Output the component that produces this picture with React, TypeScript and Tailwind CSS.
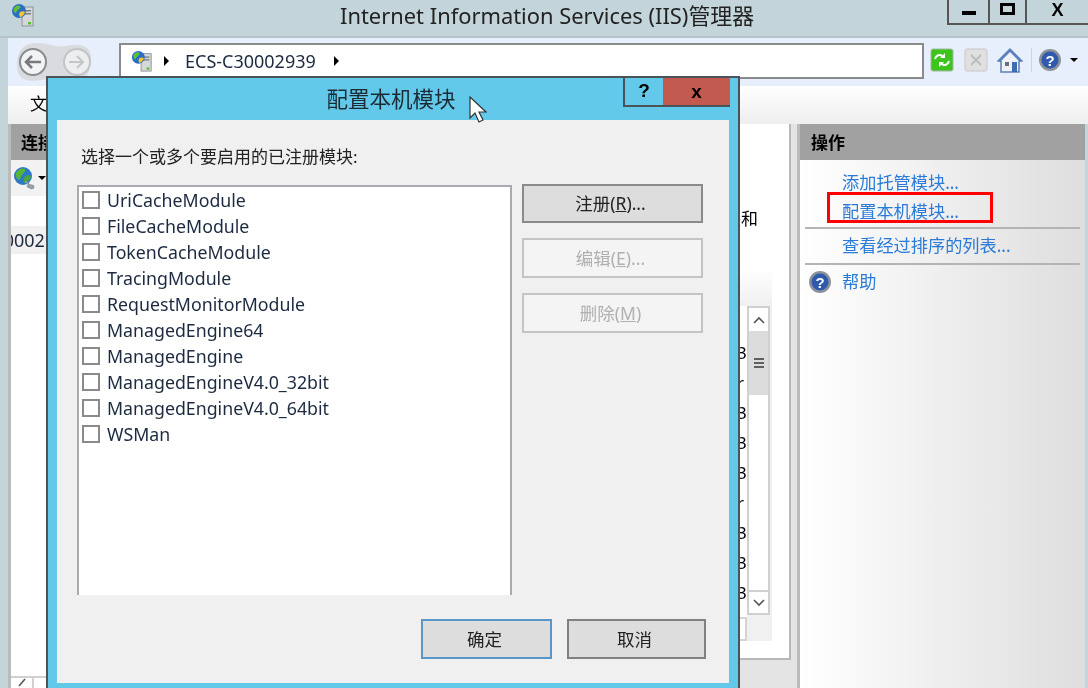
import React from "react";

const SANS = "font-['Noto_Sans','Noto_Sans_CJK_SC',sans-serif]";

const modules = [
  "UriCacheModule",
  "FileCacheModule",
  "TokenCacheModule",
  "TracingModule",
  "RequestMonitorModule",
  "ManagedEngine64",
  "ManagedEngine",
  "ManagedEngineV4.0_32bit",
  "ManagedEngineV4.0_64bit",
  "WSMan",
];

// characters of the hidden table that stick out right of the dialog
const rowEnds = ["3", "r", "3", "3", "3", "r", "3", "3", "3"];

function ServerGlobe({ className }: { className: string }) {
  return (
    <svg viewBox="0 0 24 24" className={className}>
      <rect x="11" y="4" width="11" height="19" fill="#d5d8da" stroke="#8d9296" strokeWidth="1" />
      <rect x="13" y="7" width="7" height="1.5" fill="#7b8084" />
      <rect x="13" y="10" width="7" height="1.5" fill="#7b8084" />
      <rect x="17" y="19" width="3" height="2.5" fill="#58c02c" />
      <circle cx="8" cy="8" r="7" fill="#2a6fc4" />
      <path d="M3 5c2-3 5-3 6-2 1 2-1 3-2 4-2 1-1 3-3 3-1-1-2-3-1-5z" fill="#5fbf3a" />
      <path d="M9 9c2-1 4-1 5 0-1 3-3 5-5 5-1-2-1-3 0-5z" fill="#f2c531" />
    </svg>
  );
}

function GlobeTool() {
  return (
    <svg viewBox="0 0 24 24" className="w-[24px] h-[24px]">
      <circle cx="10" cy="10" r="9" fill="#2d78c8" />
      <path d="M3 7c3-5 7-5 9-4 1 3-2 4-3 6-2 2-1 4-3 5-2-1-4-4-3-7z" fill="#56b53a" />
      <path d="M11 11c3-2 6-2 7-1-1 4-4 7-6 7-2-2-2-4-1-6z" fill="#4aa53a" />
      <path d="M12 16c2 0 3 1 4 3l4 1c1 1 0 3-2 2l-4-2" fill="none" stroke="#8e9aa0" strokeWidth="2" />
    </svg>
  );
}

function NavButtons() {
  return (
    <svg viewBox="0 0 80 50" className="w-[80px] h-[50px]">
      <path
        d="M3 26C3 8 12 3 24 3c12 0 16 5 28 3 10-2 24-3 25 11 1 16-8 28-22 28-12 0-14-8-28-5C14 42 3 40 3 26z"
        fill="#d9dbde"
      />
      <circle cx="19" cy="22" r="13" fill="#f2f3f5" stroke="#8a8c8e" strokeWidth="2" />
      <path d="M27 22H12m6-6l-6 6 6 6" fill="none" stroke="#77797b" strokeWidth="2.5" />
      <circle cx="63" cy="22" r="13" fill="#eceef0" stroke="#c2c4c6" strokeWidth="2" />
      <path d="M55 22h14m-6-6l6 6-6 6" fill="none" stroke="#c4c6c8" strokeWidth="2" />
    </svg>
  );
}

function HelpIcon({ size }: { size: string }) {
  return (
    <svg viewBox="0 0 24 24" className={size}>
      <circle cx="12" cy="12" r="11" fill="#8d929a" />
      <circle cx="12" cy="12" r="8.5" fill="#2f59ad" />
      <text x="12" y="17.5" textAnchor="middle" fontSize="15" fontWeight="700" fill="#fff" fontFamily="Liberation Sans">
        ?
      </text>
    </svg>
  );
}

function Toolbar() {
  return (
    <div className="ml-auto mr-[10px] flex items-center">
      <svg viewBox="0 0 24 24" className="w-[24px] h-[24px] mr-[10px]">
        <rect x="1" y="1" width="22" height="22" rx="2" fill="#3fc41f" stroke="#a0b8a0" />
        <path d="M5 11c1-4 5-5 7-3l2 1M19 13c-1 4-5 5-7 3l-2-1" fill="none" stroke="#fff" strokeWidth="2" />
        <path d="M15 5v5h-5zM9 19v-5h5z" fill="#fff" />
      </svg>
      <svg viewBox="0 0 24 24" className="w-[24px] h-[24px] mr-[9px]">
        <rect x="1" y="1" width="22" height="22" rx="2" fill="#e0e0e0" stroke="#c8c8c8" />
        <path d="M7 7l10 10M17 7L7 17" stroke="#bcbcbc" strokeWidth="2" />
      </svg>
      <svg viewBox="0 0 26 26" className="w-[26px] h-[26px] mr-[8px]">
        <path d="M13 2L1 14h3v11h18V14h3z" fill="#eef1f5" stroke="#5f7fb5" strokeWidth="1.5" />
        <path d="M13 2L1 14h3L13 5l9 9h3z" fill="#5a7fc5" />
        <rect x="15" y="15" width="5" height="10" fill="#3d6db0" />
        <rect x="8" y="15" width="4" height="4" fill="#6b7078" />
      </svg>
      <div className="w-[1px] h-[24px] bg-[#cfd3da] mr-[6px]" />
      <HelpIcon size="w-[24px] h-[24px]" />
      <div className="ml-[8px] w-0 h-0 border-x-[4px] border-x-transparent border-t-[4px] border-t-black" />
    </div>
  );
}

function ActionLink({ children }: { children: React.ReactNode }) {
  return <div className="pl-[42px] h-[29px] leading-[29px] text-[17.2px] text-[#2a7bd8]">{children}</div>;
}

function ActionsPanel() {
  return (
    <div className="w-[285px] flex flex-col bg-gradient-to-r from-white to-[#dedede]">
      <div className="h-[36px] shrink-0 bg-[#a1a1a1] pl-[11px] leading-[38px] text-[17px] font-bold text-black">操作</div>
      <div className="flex flex-col pt-[8px] relative">
        <ActionLink>添加托管模块...</ActionLink>
        <ActionLink>配置本机模块...</ActionLink>
        <div className="absolute left-[27px] top-[32px] w-[166px] h-[31px] border-[3px] border-[#ff0000]" />
        <div className="mx-[5px] mt-[1px] h-[2px] bg-[#b4b4b4]" />
        <div className="pl-[42px] h-[34px] leading-[34px] text-[17.2px] text-[#2a7bd8]">查看经过排序的列表...</div>
        <div className="mx-[5px] h-[2px] bg-[#b4b4b4]" />
        <div className="flex items-center h-[34px] pl-[8px] text-[17.2px] text-[#2a7bd8]">
          <HelpIcon size="w-[24px] h-[24px]" />
          <span className="ml-[10px]">帮助</span>
        </div>
      </div>
    </div>
  );
}

function MiddlePanel() {
  return (
    <div className="w-[750px] flex flex-col bg-[#e4e4e4] border-r-[3px] border-[#bbbbbb]">
      <div className="flex-1 mr-[6px] mb-[28px] bg-white border-r-[2px] border-b-[2px] border-[#b8b8b8] flex flex-col items-end overflow-hidden">
        <div className="h-[84px] pt-[84px] w-full shrink-0 text-[17px] leading-[22px] text-right pr-[31px] text-black">模块和</div>
        <div className="mt-[60px] mr-[17px] w-[40px] h-[38px] shrink-0 bg-gradient-to-b from-white to-[#f0f0f0]" />
        <div className="flex mr-[17px] shrink-0 h-[311px] w-[40px] bg-[#f0f0f0]">
          <div className="w-[15px] flex flex-col pt-[32px] overflow-hidden bg-white">
            {rowEnds.map((c, i) => (
              <div key={i} className="h-[30px] shrink-0 leading-[30px] text-[17px] text-black ml-[5px]">
                {c}
              </div>
            ))}
          </div>
          <div className="w-[23px] h-[309px] border-2 border-[#d0d0d0] flex flex-col items-center bg-white">
            <div className="h-[23px] shrink-0 flex items-center justify-center">
              <svg viewBox="0 0 12 8" className="w-[12px] h-[8px]">
                <path d="M1 7l5-5 5 5" fill="none" stroke="#555" strokeWidth="1.6" />
              </svg>
            </div>
            <div className="w-full h-[64px] shrink-0 bg-[#dcdcdc] flex items-center justify-center">
              <div className="w-[10px] h-[10px] border-y-[2px] border-[#606060] flex items-center">
                <div className="w-full h-[2px] bg-[#606060]" />
              </div>
            </div>
            <div className="flex-1" />
            <div className="w-full h-[23px] shrink-0 flex items-center justify-center border-t-2 border-[#d0d0d0]">
              <svg viewBox="0 0 12 8" className="w-[12px] h-[8px]">
                <path d="M1 1l5 5 5-5" fill="none" stroke="#555" strokeWidth="1.6" />
              </svg>
            </div>
          </div>
        </div>
        <div className="mr-[17px] w-[40px] h-[24px] shrink-0 bg-[#f0f0f0]">
          <div className="w-[15px] h-full bg-white border-y-[2px] border-r-[2px] border-[#d4d4d4]" />
        </div>
      </div>
    </div>
  );
}

function LeftPanel() {
  return (
    <div className="w-[42px] shrink-0 flex flex-col border-l-[3px] border-[#bbbbbb] bg-white overflow-hidden">
      <div className="h-[36px] shrink-0 bg-[#a1a1a1] pl-[10px] leading-[38px] text-[17px] font-bold text-black whitespace-nowrap">连接</div>
      <div className="h-[36px] shrink-0 bg-[#f2f2f2] flex items-center pl-[2px]">
        <GlobeTool />
        <div className="ml-[1px] w-0 h-0 border-x-[4px] border-x-transparent border-t-[4px] border-t-black" />
      </div>
      <div className="mt-[30px] h-[28px] shrink-0 bg-[#f0f0f0] leading-[28px] text-[18px] whitespace-nowrap text-[#1c2a40] overflow-hidden">
        <span className="block -ml-[66px]">ECS-C30002939</span>
      </div>
      <div className="flex-1" />
      <div className="h-[12px] shrink-0 flex border-t-[2px] border-[#d0d0d0]">
        <div className="w-[23px] border-r-[2px] border-[#d0d0d0] flex justify-center">
          <svg viewBox="0 0 10 10" className="w-[10px] h-[10px]">
            <path d="M8 1L2 8" fill="none" stroke="#555" strokeWidth="1.6" />
          </svg>
        </div>
      </div>
    </div>
  );
}

function Dialog() {
  return (
    <div className="absolute left-[46px] top-[76px] w-[694px] h-[616px] bg-[#63c9ea] border-2 border-[#4a5358] flex flex-col">
      <div className="h-[42px] shrink-0 relative flex items-center justify-center pr-[4px]">
        <span className="text-[21.5px] text-[#1c2a33]">配置本机模块</span>
        <div className="absolute right-[8px] top-0 flex h-[29px]">
          <div className="w-[40px] border-l-[2px] border-b-[2px] border-[#4a5358] flex items-center justify-center text-[19px] font-bold text-black font-['Liberation_Sans']">
            ?
          </div>
          <div className="w-[67px] bg-[#c25a50] border-b-[2px] border-[#4a5358] flex items-center justify-center text-[19px] leading-[20px] font-bold text-black font-['Liberation_Sans']">
            x
          </div>
        </div>
      </div>
      <div className="mx-[9px] flex-1 bg-[#f0f0f0] px-[20px] pt-[24px] flex flex-col mb-[7px]">
        <div className="text-[17px] leading-[26px] text-[#222] pl-[4px]">选择一个或多个要启用的已注册模块:</div>
        <div className="flex mt-[15px] gap-[10px] items-start">
          <div className="w-[435px] h-[410px] bg-white border-2 border-b-0 border-[#a8acb0] pl-[3px]">
            {modules.map((m) => (
              <div key={m} className="h-[26px] flex items-center">
                <div className="w-[18px] h-[18px] border-2 border-[#8a8a8a] bg-white" />
                <span className="ml-[7px] text-[17.75px] leading-[24px] text-[#1c2a40] whitespace-nowrap">{m}</span>
              </div>
            ))}
          </div>
          <div className="w-[181px] flex flex-col gap-[15px] -mt-[1px]">
            <button className="h-[39px] pr-[4px] bg-[#dddddd] border-2 border-[#8a8a8a] text-[17.5px] text-[#222]">
              注册(<span className="underline">R</span>)...
            </button>
            <button className="h-[40px] pr-[4px] bg-[#f4f4f4] border-2 border-[#c4c4c4] text-[17.5px] text-[#b0b0b0]">
              编辑(<span className="underline">E</span>)...
            </button>
            <button className="h-[40px] pr-[4px] bg-[#f4f4f4] border-2 border-[#c4c4c4] text-[17.5px] text-[#b0b0b0]">
              删除(<span className="underline">M</span>)
            </button>
          </div>
        </div>
        <div className="flex mt-[24px] ml-[344px]">
          <button className="w-[131px] h-[40px] pr-[4px] bg-[#dddddd] border-2 border-[#5a96c8] text-[17.5px] text-[#222]">确定</button>
          <button className="ml-[15px] w-[139px] h-[40px] pr-[4px] bg-[#dddddd] border-2 border-[#808080] text-[17.5px] text-[#222]">取消</button>
        </div>
      </div>
    </div>
  );
}

export default function App() {
  return (
    <div className={`relative w-[1088px] h-[688px] overflow-hidden bg-[#c3d5da] flex flex-col blur-[0.4px] ${SANS}`}>
      <div className="h-[38px] shrink-0 flex items-start relative border-b-[2px] border-[#b4c4ca]">
        <ServerGlobe className="ml-[11px] mt-[3px] w-[24px] h-[24px]" />
        <div className="absolute left-[340px] top-0 h-[32px] leading-[32px] text-[21.9px] text-[#222] whitespace-nowrap">
          Internet Information Services (IIS)管理器
        </div>
        <div className="ml-auto flex h-[25px]">
          <div className="w-[41px] border-l-[2px] border-b-[2px] border-[#555] flex items-center justify-center">
            <div className="w-[14px] h-[4px] bg-black mt-[3px]" />
          </div>
          <div className="w-[37px] border-l-[2px] border-b-[2px] border-[#555] flex items-center justify-center">
            <div className="w-[15px] h-[12px] border-[3px] border-black -mt-[6px]" />
          </div>
          <div className="w-[63px] border-l-[2px] border-b-[2px] border-[#555] flex items-start justify-center text-[18px] leading-[20px] font-bold text-black font-['Liberation_Sans']">
            X
          </div>
        </div>
      </div>
      <div className="flex-1 ml-[8px] flex flex-col min-h-0">
        <div className="h-[48px] shrink-0 bg-[#e8effc] flex items-center">
          <div className="ml-[6px] w-[80px] shrink-0 mt-[6px]">
            <NavButtons />
          </div>
          <div className="ml-[25px] w-[805px] h-[36px] -mt-[2px] border-2 border-[#8b8b8b] bg-white flex items-center pl-[10px] text-[18px] text-[#1c2a40]">
            <ServerGlobe className="w-[22px] h-[22px]" />
            <div className="ml-[11px] w-0 h-0 border-y-[5px] border-y-transparent border-l-[5px] border-l-black" />
            <span className="ml-[16px]">ECS-C30002939</span>
            <div className="ml-[18px] w-0 h-0 border-y-[5px] border-y-transparent border-l-[5px] border-l-black" />
          </div>
          <div className="flex-1 -mt-[4px] flex">
            <Toolbar />
          </div>
        </div>
        <div className="h-[38px] shrink-0 bg-gradient-to-b from-white to-[#eeeeee] pl-[22px] leading-[36px] text-[17px] text-black">文</div>
        <div className="flex-1 flex min-h-0">
          <LeftPanel />
          <MiddlePanel />
          <ActionsPanel />
        </div>
      </div>
      <Dialog />
      <svg viewBox="0 0 18 28" className="absolute left-[469px] top-[96px] w-[18px] h-[28px]">
        <path d="M1 1v21l5-5 4 9 4-2-4-8h7z" fill="#fff" stroke="#333" strokeWidth="1.2" />
      </svg>
    </div>
  );
}
